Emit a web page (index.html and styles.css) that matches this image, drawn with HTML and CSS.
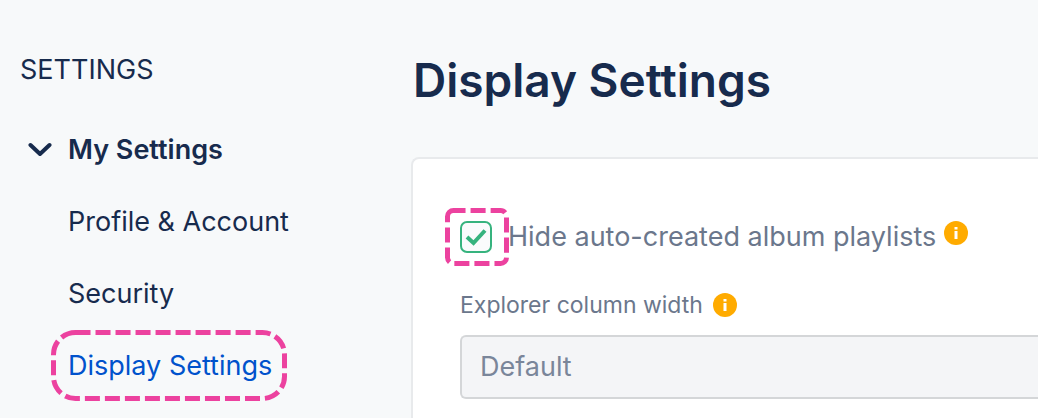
FILE: index.html
```
<!DOCTYPE html>
<html lang="en">
<head>
  <meta charset="UTF-8" />
  <meta name="viewport" content="width=device-width, initial-scale=1.0" />
  <title>Display Settings</title>
  <link rel="stylesheet" href="styles.css">
</head>
<body>

  <!-- ==== SIDEBAR ==== -->
  <aside class="sidebar">
    <h2 class="sidebar-title">SETTINGS</h2>
    <nav class="menu">
      <button class="menu-toggle" type="button" aria-expanded="true">
        <svg class="chevron" viewBox="0 0 24 24" aria-hidden="true">
          <path d="M2.500 7 L12 16 L21.500 7" />
        </svg>
        My Settings
      </button>
      <a class="menu-link" href="#profile">Profile &amp; Account</a>
      <a class="menu-link" href="#security">Security</a>
      <a class="menu-link active" href="#display">Display Settings
        <svg class="ring ring-link" viewBox="0 0 236 71" aria-hidden="true">
          <rect x="2.500" y="2.500" width="231" height="66" rx="22" pathLength="555" />
        </svg>
      </a>
    </nav>
  </aside>

  <!-- ==== CONTENT ==== -->
  <main class="content">
    <h1>Display Settings</h1>

    <form class="card">
      <div class="check-row">
        <span class="check-wrap">
          <input id="hide-playlists" class="check" type="checkbox" checked />
          <svg class="tick" viewBox="0 0 32 32" aria-hidden="true">
            <path d="M7 16 L13.500 22 L25 9.500" />
          </svg>
          <svg class="ring ring-check" viewBox="0 0 64 58" aria-hidden="true">
            <rect x="2.500" y="2.500" width="59" height="53" rx="6" stroke-dashoffset="3" pathLength="212" />
          </svg>
        </span>
        <label class="check-label" for="hide-playlists">Hide auto-created album playlists</label>
        <svg class="info info-raised" viewBox="0 0 24 24" aria-hidden="true">
          <circle cx="12" cy="12" r="12" />
          <path d="M10.500 6h3v2.500h-3zM10.500 10h3v8h-3z" />
        </svg>
      </div>

      <div class="field-head">
        <label class="field-label" for="column-width">Explorer column width</label>
        <svg class="info" viewBox="0 0 24 24" aria-hidden="true">
          <circle cx="12" cy="12" r="12" />
          <path d="M10.500 6h3v2.500h-3zM10.500 10h3v8h-3z" />
        </svg>
      </div>
      <select id="column-width" class="field-select">
        <option>Default</option>
      </select>
    </form>
  </main>

</body>
</html>
```

FILE: styles.css
```
:root {
  --clr-bg: #f7f9fa;
  --clr-card: #fff;
  --clr-text: #172b4d;
  --clr-muted: #6b778c;
  --clr-link: #0052cc;
  --clr-border: #e8eaec;
  --clr-green: #36b37e;
  --clr-info: #ffab00;
  --clr-ring: #ec429f;
}

* { box-sizing: border-box; margin: 0; padding: 0; }
body {
  font-family: "Inter", sans-serif;
  font-size: 27px;
  line-height: 36px;
  background: var(--clr-bg);
  color: var(--clr-text);
  min-height: 100vh;
  display: flex;
  overflow: hidden;
}

.sidebar { flex: 0 0 411px; padding: 52px 20px 0; }
.sidebar-title { font-size: 27px; font-weight: 400; margin-bottom: 44px; }

.menu { display: flex; flex-direction: column; align-items: flex-start; gap: 36px; }
.menu-toggle {
  display: flex; align-items: center; gap: 16px;
  padding-left: 8px; border: none; background: none;
  font: inherit; font-weight: 600; color: inherit; cursor: pointer;
}
.chevron {
  width: 24px; height: 24px; fill: none;
  stroke: currentColor; stroke-width: 4;
  stroke-linecap: round; stroke-linejoin: round;
}
.menu-link { position: relative; margin-left: 48px; color: inherit; text-decoration: none; }
.menu-link.active { color: var(--clr-link); }

/* Dashed outlines drawn over the highlighted controls */
.ring {
  position: absolute; fill: none; pointer-events: none;
  stroke: var(--clr-ring); stroke-width: 5; stroke-dasharray: 15 5;
}
.ring-link { width: 236px; height: 71px; left: -17px; top: -18px; }
.ring-check { width: 64px; height: 58px; left: -15px; top: -13px; }

.content { flex: 1; min-width: 0; display: flex; flex-direction: column; }
h1 { font-size: 46px; line-height: 60px; font-weight: 600; margin: 50px 0 47px 2px; }

.card {
  flex: 1;
  background: var(--clr-card);
  border: 2px solid var(--clr-border);
  border-right: none; border-bottom: none;
  border-radius: 8px 0 0 0;
  padding: 60px 0 18px 47px;
  color: var(--clr-muted);
}

.check-row { display: flex; align-items: center; margin-bottom: 32px; }
.check-wrap { position: relative; width: 32px; height: 32px; margin-right: 16px; }
.check {
  appearance: none; display: block; width: 32px; height: 32px;
  border: 2px solid var(--clr-green); border-radius: 7px;
  background: #fafbfc;
}
.tick {
  position: absolute; inset: 0; display: none; pointer-events: none;
  fill: none; stroke: var(--clr-green); stroke-width: 4;
}
.check:checked + .tick { display: block; }

.info { width: 24px; height: 24px; margin-left: 10px; fill: var(--clr-info); }
.info path { fill: #fff; }
.info-raised { margin-left: 8px; margin-bottom: 8px; }

.field-head { display: flex; align-items: center; margin-bottom: 12px; }
.field-label { font-size: 23px; }
.field-select {
  appearance: none; display: block; width: 100%; height: 64px;
  padding: 0 18px;
  border: 2px solid #d4d6d8; border-right: none;
  border-radius: 6px 0 0 6px;
  background: #f4f5f7; color: #7a869a; font: inherit;
}
```
